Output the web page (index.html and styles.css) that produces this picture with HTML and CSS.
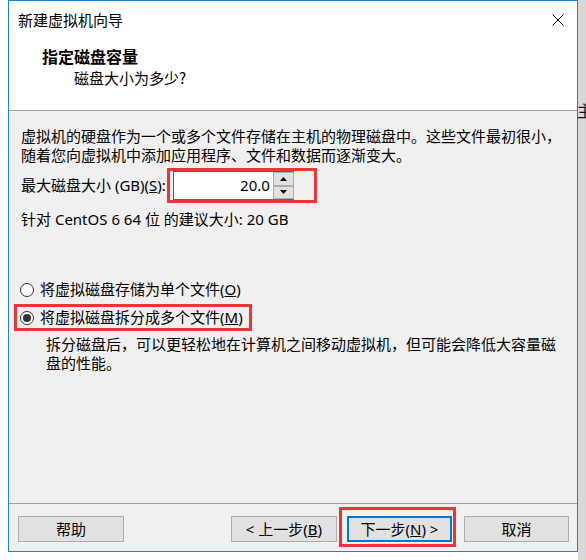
FILE: index.html
```html
<!DOCTYPE html>
<html>
<head>
<meta charset="utf-8">
<link rel="stylesheet" href="styles.css">
</head>
<body>
<div class="screen">
  <div class="window">
    <div class="titlebar">
      <span class="title">新建虚拟机向导</span>
      <svg class="close" width="12" height="12" viewBox="0 0 12 12"><path d="M0.5 0.5 L11.5 11.5 M11.5 0.5 L0.5 11.5" stroke="#000" stroke-width="1" fill="none"/></svg>
    </div>
    <div class="header">
      <div class="h-title">指定磁盘容量</div>
      <div class="h-sub">磁盘大小为多少?</div>
    </div>
    <div class="body">
      <p class="desc">虚拟机的硬盘作为一个或多个文件存储在主机的物理磁盘中。这些文件最初很小，<br>随着您向虚拟机中添加应用程序、文件和数据而逐渐变大。</p>
      <div class="size-row">
        <span class="label">最大磁盘大小 (GB)(<u>S</u>):</span>
        <div class="mark spin-mark">
          <div class="input">20.0</div>
          <div class="spin">
            <span class="spin-btn"><svg width="7" height="4" viewBox="0 0 7 4"><path d="M3.5 0 L7 4 L0 4 Z" fill="#000"/></svg></span>
            <span class="spin-btn"><svg width="7" height="4" viewBox="0 0 7 4"><path d="M0 0 L7 0 L3.5 4 Z" fill="#000"/></svg></span>
          </div>
        </div>
      </div>
      <p class="rec">针对 CentOS 6 64 位 的建议大小: 20 GB</p>
      <div class="radio-row r1"><span class="radio"></span><span>将虚拟磁盘存储为单个文件(<u>O</u>)</span></div>
      <div class="mark radio-mark">
        <div class="radio-row"><span class="radio checked"></span><span>将虚拟磁盘拆分成多个文件(<u>M</u>)</span></div>
      </div>
      <p class="note">拆分磁盘后，可以更轻松地在计算机之间移动虚拟机，但可能会降低大容量磁<br>盘的性能。</p>
    </div>
    <div class="footer">
      <button class="btn">帮助</button>
      <div class="spacer"></div>
      <button class="btn">&lt; 上一步(<u>B</u>)</button>
      <div class="next-wrap">
        <button class="btn default">下一步(<u>N</u>) &gt;</button>
        <span class="annot"></span>
      </div>
      <button class="btn cancel">取消</button>
    </div>
  </div>
  <div class="backdrop"><span class="frag">主</span></div>
</div>
</body>
</html>
```
FILE: styles.css
```css
html, body {
  margin: 0;
  padding: 0;
  background: #ffffff;
}
body {
  width: 586px;
  height: 560px;
  overflow: hidden;
  font-family: "Noto Sans", "Noto Sans CJK SC", sans-serif;
  font-size: 15px;
  color: #000;
}
.screen {
  display: flex;
  height: 560px;
  padding-left: 8px;
  box-sizing: border-box;
}
.window {
  width: 570px;
  height: 552px;
  box-sizing: border-box;
  border: 1px solid #1883d7;
  display: flex;
  flex-direction: column;
  background: #ffffff;
}
.backdrop {
  flex: 1;
  background: #d8d8d8;
  overflow: hidden;
}
.frag {
  display: block;
  margin-top: 100px;
  margin-left: -1px;
  line-height: 20px;
  font-family: "Noto Sans CJK SC", sans-serif;
  font-size: 16px;
  color: #111;
}
.titlebar {
  height: 37px;
  display: flex;
  align-items: center;
  justify-content: space-between;
  padding: 0 13px 0 9px;
  flex-shrink: 0;
}
.title {
  font-family: "Noto Sans CJK SC", sans-serif;
  line-height: 20px;
}
.close {
  display: block;
}
.header {
  border-bottom: 1px solid #a0a0a0;
  padding: 8px 0 0 33px;
  flex-shrink: 0;
  box-sizing: border-box;
  height: 73px;
}
.h-title {
  font-family: "Noto Sans CJK SC", sans-serif;
  font-weight: bold;
  font-size: 16px;
  line-height: 20px;
}
.h-sub {
  font-family: "Noto Sans CJK SC", sans-serif;
  margin-top: 2px;
  margin-left: 32px;
  line-height: 20px;
}
.body {
  background: #f0f0f0;
  height: 392px;
  flex-shrink: 0;
  padding: 16px 0 0 12px;
  box-sizing: border-box;
}
.desc, .rec, .note {
  margin: 0;
  line-height: 19px;
}
.size-row {
  margin-top: 3px;
  display: flex;
  align-items: center;
}
.label {
  line-height: 19px;
}
.mark {
  border: 3px solid #ee3535;
}
.spin-mark {
  display: flex;
  width: 150px;
  height: 35px;
  box-sizing: border-box;
  padding: 0 0 0 3px;
  align-items: flex-start;
  margin-left: 1px;
}
.input {
  width: 100px;
  height: 29px;
  box-sizing: border-box;
  background: #fff;
  border: 1px solid #0078d7;
  border-right: none;
  text-align: right;
  padding-right: 3px;
  line-height: 27px;
}
.spin {
  width: 21px;
  height: 29px;
  display: flex;
  flex-direction: column;
  background: #fff;
  border-top: 1px solid #0078d7;
  border-bottom: 1px solid #0078d7;
  box-sizing: border-box;
}
.spin-btn {
  flex: 1;
  display: flex;
  align-items: center;
  justify-content: center;
  background: #e1e1e1;
  border: 1px solid #adadad;
}
.spin-btn svg {
  display: block;
}
.rec {
  margin-top: 7px;
}
.radio-row {
  display: flex;
  align-items: center;
  line-height: 19px;
}
.r1 {
  margin-top: 51px;
  margin-left: -1px;
}
.radio {
  width: 14px;
  height: 14px;
  box-sizing: border-box;
  border: 1px solid #333;
  border-radius: 50%;
  background: #fff;
  margin-right: 6px;
  display: flex;
  align-items: center;
  justify-content: center;
  flex-shrink: 0;
}
.radio.checked::after {
  content: "";
  width: 8px;
  height: 8px;
  border-radius: 50%;
  background: #333;
}
.radio-mark {
  display: inline-flex;
  margin-top: 5px;
  margin-left: -7px;
  height: 27px;
  box-sizing: border-box;
  padding: 0 6px 0 3px;
  align-items: center;
}
.radio-mark .radio-row {
  line-height: 21px;
}
.note {
  margin-top: 4px;
  margin-left: 25px;
}
.footer {
  flex: 1;
  border-top: 1px solid #a0a0a0;
  background: #f0f0f0;
  display: flex;
  align-items: flex-start;
  padding: 12px 8px 0 9px;
}
.spacer {
  flex: 1;
}
.btn {
  width: 106px;
  height: 26px;
  box-sizing: border-box;
  background: #e1e1e1;
  border: 1px solid #adadad;
  font-family: "Noto Sans", "Noto Sans CJK SC", sans-serif;
  font-size: 15px;
  color: #000;
  padding: 0;
  line-height: 22px;
  display: block;
}
.next-wrap {
  position: relative;
  margin-left: 10px;
}
.btn.default {
  width: 105px;
  border: 2px solid #0078d7;
}
.annot {
  position: absolute;
  left: -8px;
  top: -9px;
  right: -4px;
  bottom: -5px;
  border: 3px solid #ee3535;
}
.cancel {
  margin-left: 12px;
  width: 105px;
}
```
